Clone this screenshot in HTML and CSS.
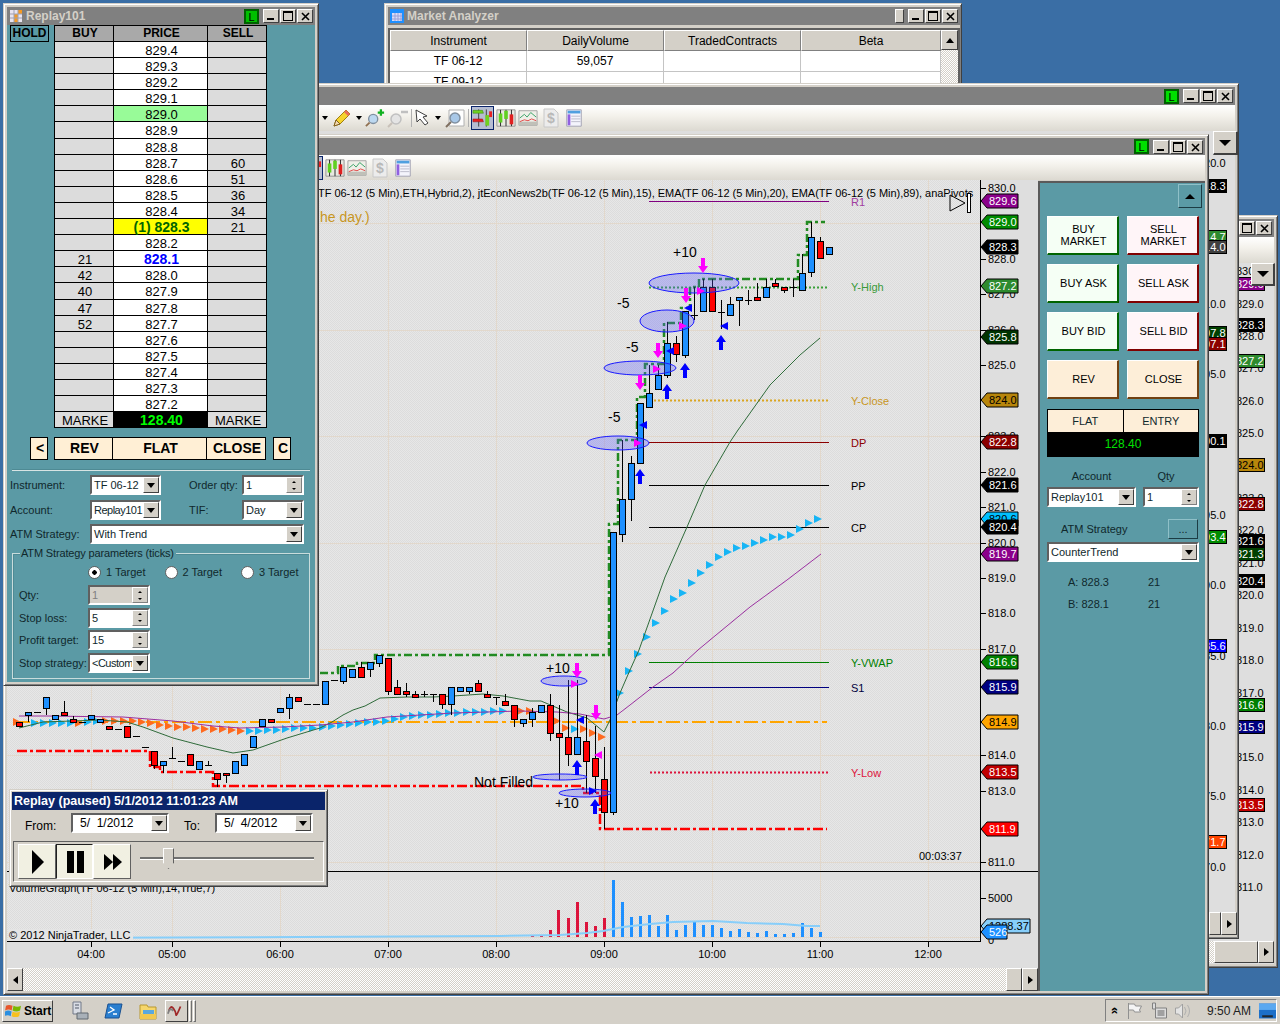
FILE: index.html
```html
<!DOCTYPE html>
<html lang="en">
<head>
    <meta charset="UTF-8">
    <title>NinjaTrader Replay</title>
    <link rel="stylesheet" href="styles.css">
</head>
<body>
<svg class="defs">
    <symbol id="i-x" viewBox="0 0 9 9"><path d="M1 1l7 7M8 1l-7 7" stroke="#000" stroke-width="1.6"/></symbol>
    <symbol id="i-grid" viewBox="0 0 14 14"><path fill="#e8e4f0" d="M1 1h12v12H1z"/><path fill="#f59a23" d="M5 5h4v4H5zM9 1h4v4H9zM5 9h4v4H5z"/><path stroke="#a0a0b0" d="M5 1v12M9 1v12M1 5h12M1 9h12"/></symbol>
    <symbol id="i-market" viewBox="0 0 14 14"><path fill="#1e90ff" d="M0 0h14v14H0z"/><path fill="#d8dcf8" d="M2 4h10v8H2z"/><path stroke="#9aa0d8" d="M5 4v8M8 4v8M11 4v8M2 7h10M2 10h10"/></symbol>
    <symbol id="i-pencil" viewBox="0 0 22 22"><path d="M3 19l2-6L15 3l4 4L9 17z" fill="#f6d32d" stroke="#a08010"/><path d="M3 19l2-6 4 4z" fill="#f3d9b0" stroke="#806020"/><path d="M15 3l4 4-2 2-4-4z" fill="#e86a5a"/></symbol>
    <symbol id="i-zoomin" viewBox="0 0 22 22"><circle cx="9" cy="12" r="5" fill="#bcd8f0" stroke="#8090a0" stroke-width="1.5"/><path d="M5 16l-4 4" stroke="#907050" stroke-width="2"/><path d="M14 5h7M17.5 1.5v7" stroke="#10b020" stroke-width="2.5"/></symbol>
    <symbol id="i-zoomout" viewBox="0 0 22 22"><circle cx="9" cy="12" r="5" fill="#e4e4e4" stroke="#c0c0c0" stroke-width="1.5"/><path d="M5 16l-4 4" stroke="#c8c0b8" stroke-width="2"/><path d="M14 5h7" stroke="#c0c0c0" stroke-width="2.5"/></symbol>
    <symbol id="i-cursor" viewBox="0 0 18 18"><path d="M2 1l1 12 3-3 5 6 3-2-5-6 4-1z" fill="#fff" stroke="#404040"/></symbol>
    <symbol id="i-zoombox" viewBox="0 0 22 22"><path d="M5 3h15v16H5z" fill="#fff" stroke="#b0b0b0"/><circle cx="11" cy="11" r="5" fill="#a8c8e8" stroke="#8090a0" stroke-width="1.5"/><path d="M7 15l-5 5" stroke="#807060" stroke-width="2"/></symbol>
    <symbol id="i-bars" viewBox="0 0 22 22"><path d="M15 2v18M7 2v18" stroke="#404040"/><path d="M1 3h10l1 3H1z" fill="#70d020" stroke="#308010" stroke-width=".5"/><path d="M1 12h10l1 3H1z" fill="#e82020" stroke="#901010" stroke-width=".5"/><path d="M14 8h4v11h-4z" fill="#70d020"/><path d="M18 4h3v6h-3z" fill="#e82020"/></symbol>
    <symbol id="i-candles" viewBox="0 0 22 22"><path d="M1 2h20v18H1z" fill="#e8e8e0" stroke="#909090"/><path d="M5 2v18M11 2v18M17 2v18" stroke="#202020"/><path d="M3 6h4v10H3z" fill="#60d020"/><path d="M9 3h4v9H9z" fill="#60d020"/><path d="M15 7h4v11h-4z" fill="#e02020"/></symbol>
    <symbol id="i-line" viewBox="0 0 22 22"><path d="M1 3h20v16H1z" fill="#efefe8" stroke="#a0a0a0"/><path d="M1 15h20v4H1z" fill="#c0c0b8"/><path d="M2 11l5-4 3 3 4-5 6 5" fill="none" stroke="#30a060"/><path d="M2 15l5-2 4 1 4-2 5 2" fill="none" stroke="#e04040"/></symbol>
    <symbol id="i-dollar" viewBox="0 0 22 22"><path d="M4 2h10l4 4v14H4z" fill="#ececec" stroke="#c8c8c8"/><text x="7" y="16" class="icon-dollar">$</text></symbol>
    <symbol id="i-table" viewBox="0 0 22 22"><path d="M3 2h16v18H3z" fill="#f4f4fc" stroke="#a0a0b0"/><path d="M4 3h14v3H4z" fill="#50a0e0"/><path d="M4 7h3v12H4z" fill="#9060e0"/><path d="M8 9h10M8 12h10M8 15h10" stroke="#b8b8c8"/></symbol>
    <symbol id="i-start" viewBox="0 0 18 16"><path d="M1 3q3-2 7 0l-1 5q-3-2-7 0z" fill="#e8562a"/><path d="M9 3q4 2 8 0l-1 5q-4 2-8 0z" fill="#7ab800"/><path d="M0 9q3-2 7 0l-1 5q-3-2-7 0z" fill="#2a8fe0"/><path d="M8 9q4 2 8 0l-1 5q-4 2-8 0z" fill="#f7c01e"/></symbol>
    <symbol id="i-server" viewBox="0 0 20 20"><path d="M3 1h8v12H3z" fill="#d8dce4" stroke="#707888"/><path d="M5 4h4M5 7h4" stroke="#505868"/><path d="M7 12h11v6H7z" fill="#a8b0b8" stroke="#606870"/></symbol>
    <symbol id="i-shell" viewBox="0 0 20 20"><path d="M4 3h14l-3 14H1z" fill="#2a7fd0" stroke="#1a5090"/><path d="M6 6l4 3-6 3M9 13h4" fill="none" stroke="#fff" stroke-width="1.3"/></symbol>
    <symbol id="i-folder" viewBox="0 0 20 20"><path d="M2 4h7l1 2h8v12H2z" fill="#f6d66a" stroke="#b89830"/><path d="M5 9h11v4H5z" fill="#58a8e0"/><path d="M2 13h16v5H2z" fill="#f0c850"/></symbol>
    <symbol id="i-ninja" viewBox="0 0 20 18"><path d="M2 9q2-7 5-3t3 7 5-9" fill="none" stroke="#a02828" stroke-width="2"/><path d="M1 12q2-8 6-3" fill="none" stroke="#808080" stroke-width="2"/></symbol>
    <symbol id="i-flag" viewBox="0 0 16 18"><path d="M2 1v16M2 2h6l1 2h6l-2 4 1 2H8L7 8H2" fill="#f4f4f4" stroke="#909090"/></symbol>
    <symbol id="i-net" viewBox="0 0 16 18"><path d="M2 1h3v6H2zM5 6h11v10H5z" fill="#dcdcdc" stroke="#808080"/><path d="M7 8h7v6H7z" fill="#a0a0a0"/></symbol>
    <symbol id="i-sound" viewBox="0 0 16 18"><path d="M1 6h3l4-4v14l-4-4H1z" fill="#e4e4e4" stroke="#a0a0a0"/><path d="M10 5q3 4 0 8M13 3q4 6 0 12" fill="none" stroke="#b0b0b0"/></symbol>
    <symbol id="i-screen" viewBox="0 0 16 14"><path d="M0 0h16v14H0z" fill="#1c6fc8"/><path d="M0 0h16v6H0z" fill="#5aa8f0"/><path d="M3 11h10v2H3z" fill="#202830"/></symbol>
</svg>

<div class="desktop">

    <!-- back window, only its right edge shows -->
    <div class="win win-far">
        <div class="titlebar">
            <span class="title-text"></span>
            <div class="ctrls"><i class="wb"><b class="g-min"></b></i><i class="wb"><b class="g-max"></b></i><i class="wb"><svg class="g-x"><use href="#i-x"/></svg></i></div>
        </div>
        <div class="toolbar"></div>
        <div class="strip-body"><svg id="strip-far" class="strip"></svg></div>
        <div class="scroll-end"><span class="dither"></span><i class="sb sb-thumb-long"></i><i class="sb"><b class="tri-r"></b></i></div>
        <i class="sb sb-drop far-drop"><b class="tri-d"></b></i>
    </div>

    <div class="win win-market">
        <div class="titlebar">
            <svg class="title-icon"><use href="#i-market"/></svg>
            <span class="title-text">Market Analyzer</span>
            <div class="ctrls"><i class="lamp lamp-off">L</i><i class="wb"><b class="g-min"></b></i><i class="wb"><b class="g-max"></b></i><i class="wb"><svg class="g-x"><use href="#i-x"/></svg></i></div>
        </div>
        <div class="market-body">
            <div class="market-grid">
                <div class="mh">Instrument</div><div class="mh">DailyVolume</div><div class="mh">TradedContracts</div><div class="mh">Beta</div>
                <div class="mc">TF 06-12</div><div class="mc">59,057</div><div class="mc"></div><div class="mc"></div>
                <div class="mc">TF 09-12</div><div class="mc"></div><div class="mc"></div><div class="mc"></div>
            </div>
            <div class="market-scroll"><i class="sb"><b class="tri-u"></b></i></div>
        </div>
    </div>

    <div class="win win-mid">
        <div class="titlebar">
            <span class="title-text">2012</span>
            <div class="ctrls"><i class="lamp">L</i><i class="wb"><b class="g-min"></b></i><i class="wb"><b class="g-max"></b></i><i class="wb"><svg class="g-x"><use href="#i-x"/></svg></i></div>
        </div>
        <div class="toolbar toolbar-mid">
            <b class="caret"></b>
            <svg class="tb"><use href="#i-pencil"/></svg><b class="caret"></b>
            <svg class="tb tb-n"><use href="#i-zoomin"/></svg>
            <svg class="tb"><use href="#i-zoomout"/></svg>
            <i class="tb-sep"></i>
            <svg class="tb tb-c"><use href="#i-cursor"/></svg><b class="caret"></b>
            <svg class="tb"><use href="#i-zoombox"/></svg>
            <i class="tb-sep"></i>
            <svg class="tb tb-on"><use href="#i-bars"/></svg>
            <svg class="tb tb-n"><use href="#i-candles"/></svg>
            <svg class="tb tb-n"><use href="#i-line"/></svg>
            <svg class="tb"><use href="#i-dollar"/></svg>
            <svg class="tb tb-n"><use href="#i-table"/></svg>
        </div>
        <div class="strip-body"><svg id="strip-mid" class="strip"></svg></div>
        <div class="scroll-end mid-scroll"><i class="sb sb-thumb"></i><i class="sb"><b class="tri-r"></b></i></div>
        <i class="sb sb-drop mid-drop"><b class="tri-d"></b></i>
    </div>

    <!-- main chart window -->
    <div class="win win-front">
        <div class="titlebar">
            <span class="title-text"></span>
            <div class="ctrls"><i class="lamp">L</i><i class="wb"><b class="g-min"></b></i><i class="wb"><b class="g-max"></b></i><i class="wb"><svg class="g-x"><use href="#i-x"/></svg></i></div>
        </div>
        <div class="toolbar toolbar-front">
            <svg class="tb tb-on"><use href="#i-bars"/></svg>
            <svg class="tb tb-n"><use href="#i-candles"/></svg>
            <svg class="tb tb-n"><use href="#i-line"/></svg>
            <svg class="tb"><use href="#i-dollar"/></svg>
            <svg class="tb tb-n"><use href="#i-table"/></svg>
        </div>
        <div class="front-main">
            <div class="chart-col">
                <svg id="chart" class="chart" width="1031" height="788" viewBox="7 180 1031 788"></svg>
                <div class="hscroll">
                    <i class="sb"><b class="tri-l"></b></i>
                    <span class="dither"></span>
                    <i class="sb"></i>
                    <i class="sb"><b class="tri-r"></b></i>
                </div>
            </div>
            <div class="side-panel">
                <div class="panel-top"><i class="panel-up"><b class="tri-u"></b></i></div>
                <div class="order-btns">
                    <div class="obtn obtn-buy">BUY<br>MARKET</div><div class="obtn obtn-sell">SELL<br>MARKET</div>
                    <div class="obtn obtn-buy">BUY ASK</div><div class="obtn obtn-sell">SELL ASK</div>
                    <div class="obtn obtn-buy">BUY BID</div><div class="obtn obtn-sell">SELL BID</div>
                    <div class="obtn obtn-rev">REV</div><div class="obtn obtn-rev">CLOSE</div>
                </div>
                <div class="pos-box">
                    <div class="pos-head"><span>FLAT</span><span>ENTRY</span></div>
                    <div class="pos-val">128.40</div>
                </div>
                <div class="panel-form">
                    <span class="pf-label">Account</span><span class="pf-label pf-qty">Qty</span>
                    <div class="combo"><span>Replay101</span><i class="drop"></i></div>
                    <div class="spin"><span>1</span><i class="arrows"><b class="tri-u"></b><b class="tri-d"></b></i></div>
                </div>
                <div class="atm-row"><span>ATM Strategy</span><i class="more-btn">...</i></div>
                <div class="combo atm-combo"><span>CounterTrend</span><i class="drop"></i></div>
                <div class="quote-row"><span>A: 828.3</span><span>21</span></div>
                <div class="quote-row"><span>B: 828.1</span><span>21</span></div>
            </div>
        </div>
    </div>

    <!-- SuperDOM -->
    <div class="win win-dom">
        <div class="titlebar">
            <svg class="title-icon"><use href="#i-grid"/></svg>
            <span class="title-text">Replay101</span>
            <div class="ctrls"><i class="lamp lamp-dark">L</i><i class="wb"><b class="g-min"></b></i><i class="wb"><b class="g-max"></b></i><i class="wb"><svg class="g-x"><use href="#i-x"/></svg></i></div>
        </div>
        <div class="dom-body">
            <div class="dom-top">
                <div class="hold">HOLD</div>
                <div class="ladder">
                    <div class="lh">BUY</div><div class="lh">PRICE</div><div class="lh">SELL</div>
                    <div class="ls"></div><div class="lp">829.4</div><div class="ls"></div>
                    <div class="ls"></div><div class="lp">829.3</div><div class="ls"></div>
                    <div class="ls"></div><div class="lp">829.2</div><div class="ls"></div>
                    <div class="ls"></div><div class="lp">829.1</div><div class="ls"></div>
                    <div class="ls"></div><div class="lp lp-high">829.0</div><div class="ls"></div>
                    <div class="ls"></div><div class="lp">828.9</div><div class="ls"></div>
                    <div class="ls"></div><div class="lp">828.8</div><div class="ls"></div>
                    <div class="ls"></div><div class="lp">828.7</div><div class="ls">60</div>
                    <div class="ls"></div><div class="lp">828.6</div><div class="ls">51</div>
                    <div class="ls"></div><div class="lp">828.5</div><div class="ls">36</div>
                    <div class="ls"></div><div class="lp">828.4</div><div class="ls">34</div>
                    <div class="ls"></div><div class="lp lp-pos">(1) 828.3</div><div class="ls">21</div>
                    <div class="ls"></div><div class="lp">828.2</div><div class="ls"></div>
                    <div class="ls">21</div><div class="lp lp-last">828.1</div><div class="ls"></div>
                    <div class="ls">42</div><div class="lp">828.0</div><div class="ls"></div>
                    <div class="ls">40</div><div class="lp">827.9</div><div class="ls"></div>
                    <div class="ls">47</div><div class="lp">827.8</div><div class="ls"></div>
                    <div class="ls">52</div><div class="lp">827.7</div><div class="ls"></div>
                    <div class="ls"></div><div class="lp">827.6</div><div class="ls"></div>
                    <div class="ls"></div><div class="lp">827.5</div><div class="ls"></div>
                    <div class="ls"></div><div class="lp">827.4</div><div class="ls"></div>
                    <div class="ls"></div><div class="lp">827.3</div><div class="ls"></div>
                    <div class="ls"></div><div class="lp">827.2</div><div class="ls"></div>
                    <div class="ls">MARKE</div><div class="lp lp-pnl">128.40</div><div class="ls">MARKE</div>
                </div>
            </div>
            <div class="dom-actions">
                <div class="da da-small">&lt;</div>
                <div class="da-group">
                    <div class="da da-a">REV</div><div class="da da-b">FLAT</div><div class="da da-a">CLOSE</div>
                </div>
                <div class="da da-small">C</div>
            </div>
            <div class="dom-sep"></div>
            <div class="dom-form">
                <label>Instrument:</label>
                <div class="combo"><span>TF 06-12</span><i class="drop"></i></div>
                <i></i>
                <label>Order qty:</label>
                <div class="spin"><span>1</span><i class="arrows"><b class="tri-u"></b><b class="tri-d"></b></i></div>

                <label>Account:</label>
                <div class="combo"><span class="tight">Replay101</span><i class="drop"></i></div>
                <i></i>
                <label>TIF:</label>
                <div class="combo"><span>Day</span><i class="drop"></i></div>

                <label>ATM Strategy:</label>
                <div class="combo form-wide"><span>With Trend</span><i class="drop"></i></div>
            </div>
            <div class="group">
                <span class="group-title">ATM Strategy parameters (ticks)</span>
                <div class="radios">
                    <span class="radio radio-on">1 Target</span>
                    <span class="radio">2 Target</span>
                    <span class="radio">3 Target</span>
                </div>
                <div class="params">
                    <label>Qty:</label>
                    <div class="spin spin-off"><span>1</span><i class="arrows"><b class="tri-u"></b><b class="tri-d"></b></i></div>
                    <label>Stop loss:</label>
                    <div class="spin"><span>5</span><i class="arrows"><b class="tri-u"></b><b class="tri-d"></b></i></div>
                    <label>Profit target:</label>
                    <div class="spin"><span>15</span><i class="arrows"><b class="tri-u"></b><b class="tri-d"></b></i></div>
                    <label>Stop strategy:</label>
                    <div class="combo"><span class="tight">&lt;Custom</span><i class="drop"></i></div>
                </div>
            </div>
        </div>
    </div>

    <!-- replay control -->
    <div class="win-replay">
        <div class="replay-title">Replay (paused) 5/1/2012 11:01:23 AM</div>
        <div class="replay-dates">
            <label>From:</label>
            <div class="combo"><span>5/ &nbsp;1/2012</span><i class="drop"></i></div>
            <label class="to-label">To:</label>
            <div class="combo"><span>5/ &nbsp;4/2012</span><i class="drop"></i></div>
        </div>
        <div class="player">
            <div class="pbtn"><b class="play"></b></div>
            <div class="pbtn pbtn-down"><b class="pause"></b></div>
            <div class="pbtn"><b class="play play-s"></b><b class="play play-s"></b></div>
            <div class="slider"><i class="thumb"></i></div>
        </div>
    </div>
</div>

<div class="taskbar">
    <div class="start"><svg class="start-flag"><use href="#i-start"/></svg>Start</div>
    <div class="quick">
        <svg class="qi"><use href="#i-server"/></svg>
        <svg class="qi"><use href="#i-shell"/></svg>
        <svg class="qi"><use href="#i-folder"/></svg>
    </div>
    <div class="task-btn"><svg class="qi"><use href="#i-ninja"/></svg></div>
    <i class="grip"></i><i class="grip"></i>
    <div class="tray">
        <span class="chev">&#187;</span>
        <svg class="ti"><use href="#i-flag"/></svg>
        <svg class="ti"><use href="#i-net"/></svg>
        <svg class="ti"><use href="#i-sound"/></svg>
        <span class="clock">9:50 AM</span>
        <svg class="ti"><use href="#i-screen"/></svg>
    </div>
</div>

<script src="chart.js"></script>
</body>
</html>
```

FILE: styles.css
```css
* {
    box-sizing: border-box;
}
html, body {
    margin: 0;
    height: 100%;
    overflow: hidden;
}
body {
    font-family: "Liberation Sans", Arial, sans-serif;
    font-size: 11px;
    color: #000;
    background-color: #3a6ea5;
    display: flex;
    flex-direction: column;
    height: 1024px;
}
i, b {
    display: block;
    font-style: normal;
}
.defs {
    display: none;
}
.icon-dollar {
    font: bold 14px "Liberation Sans", sans-serif;
    fill: #b8b8b8;
}
.desktop {
    position: relative;
    flex: 1;
}

/* window chrome */
.win {
    position: absolute;
    display: flex;
    flex-direction: column;
    background-color: #d4d0c8;
    border: 1px solid;
    border-color: #d4d0c8 #404040 #404040 #d4d0c8;
    box-shadow: inset 1px 1px 0 #fff, inset -1px -1px 0 #808080;
    padding: 3px;
}
.titlebar {
    display: flex;
    align-items: center;
    flex: 0 0 18px;
    background-color: #808080;
    padding: 0 2px 0 2px;
}
.title-icon {
    width: 14px;
    height: 14px;
    margin-right: 3px;
}
.title-text {
    font-weight: bold;
    font-size: 12px;
    color: #d4d0c8;
}
.ctrls {
    margin-left: auto;
    display: flex;
    align-items: center;
    gap: 1px;
}
.lamp {
    width: 15px;
    height: 15px;
    margin-right: 3px;
    background-color: #00e000;
    border: 2px solid #006000;
    font-size: 11px;
    line-height: 12px;
    text-align: center;
}
.lamp-dark {
    background-color: #00c000;
}
.lamp-off {
    width: 9px;
    height: 14px;
    background-color: #d4d0c8;
    border: 1px solid;
    border-color: #fff #404040 #404040 #fff;
    color: transparent;
}
.wb {
    position: relative;
    width: 16px;
    height: 14px;
    background-color: #d4d0c8;
    border: 1px solid;
    border-color: #fff #404040 #404040 #fff;
}
.g-min {
    position: absolute;
    left: 3px;
    bottom: 2px;
    width: 7px;
    height: 2px;
    background-color: #000;
}
.g-max {
    position: absolute;
    left: 2px;
    top: 1px;
    width: 10px;
    height: 10px;
    border: 1px solid #000;
    border-top-width: 2px;
}
.g-x {
    position: absolute;
    left: 3px;
    top: 2px;
    width: 9px;
    height: 9px;
}
.toolbar {
    display: flex;
    align-items: center;
    flex: 0 0 26px;
    gap: 2px;
    background: linear-gradient(#fff, #f4f2ec 40%, #dcd9d1);
}
.toolbar-mid {
    padding-left: 77px;
}
.toolbar-front {
    padding-left: 293px;
}
.tb {
    width: 22px;
    height: 22px;
}
.tb-n {
    width: 20px;
}
.tb-c {
    width: 18px;
    height: 18px;
}
.tb-on {
    width: 23px;
    height: 24px;
    background-color: #b6bdd2;
    border: 1px solid #0a246a;
}
.tb-sep {
    width: 1px;
    height: 18px;
    background-color: #b0b0b0;
}
.caret {
    width: 0;
    height: 0;
    margin: 0 1px;
    border: 3px solid transparent;
    border-top: 4px solid #000;
    border-bottom: 0;
}

/* scroll bar parts and small arrows */
.sb {
    display: flex;
    align-items: center;
    justify-content: center;
    flex: 0 0 16px;
    height: 100%;
    background-color: #d4d0c8;
    border: 1px solid;
    border-color: #fff #404040 #404040 #fff;
}
.tri-r, .tri-l, .tri-u, .tri-d {
    width: 0;
    height: 0;
    border: 4px solid transparent;
}
.tri-r {
    border-left: 5px solid #000;
    border-right: 0;
}
.tri-l {
    border-right: 5px solid #000;
    border-left: 0;
}
.tri-u {
    border-bottom: 5px solid #000;
    border-top: 0;
}
.tri-d {
    border-top: 5px solid #000;
    border-bottom: 0;
}
.dither {
    flex: 1;
    height: 100%;
    background: repeating-conic-gradient(#fff 0 25%, #d4d0c8 0 50%) 0 0 / 2px 2px;
}

/* far window */
.win-far {
    left: 1100px;
    top: 215px;
    width: 178px;
    height: 753px;
}
.strip-body {
    position: relative;
    flex: 1;
    background-color: #dedede;
    min-height: 0;
}
.strip {
    position: absolute;
    left: 0;
    top: 0;
    width: 100%;
    height: 100%;
}
.scroll-end {
    display: flex;
    flex: 0 0 24px;
    background-color: #dedede;
}
.sb-thumb-long {
    flex-basis: 44px;
}
.win-far .scroll-end {
    padding: 1px 0;
}
.far-drop {
    position: absolute;
    left: 150px;
    top: 47px;
    width: 24px;
    height: 23px;
}
.sb-drop {
    flex: none;
    border-width: 1px 2px 2px 1px;
}
.sb-drop .tri-d {
    border-width: 6px 6px 0;
}

/* market analyzer */
.win-market {
    left: 384px;
    top: 3px;
    width: 578px;
    height: 90px;
    padding-right: 1px;
}
.market-body {
    display: flex;
    flex: 1;
    background-color: #fff;
    border: 2px solid #606060;
    margin-top: 3px;
    overflow: hidden;
}
.market-grid {
    flex: 1;
    display: grid;
    grid-template-columns: 137px 137px 137px 1fr;
    grid-auto-rows: 21px;
    align-content: start;
    font-size: 12px;
    text-align: center;
}
.mh {
    line-height: 21px;
    background-color: #d4d0c8;
    border: 1px solid;
    border-color: #fff #808080 #808080 #fff;
}
.mc {
    line-height: 21px;
    border-right: 1px solid #c4c4c4;
    border-bottom: 1px solid #c4c4c4;
}
.market-scroll {
    flex: 0 0 17px;
    background: repeating-conic-gradient(#fff 0 25%, #d4d0c8 0 50%) 0 0 / 2px 2px;
}
.market-scroll .sb {
    height: 20px;
}

/* mid window */
.win-mid {
    left: 240px;
    top: 83px;
    width: 999px;
    height: 856px;
}
.mid-scroll {
    position: absolute;
    left: 968px;
    top: 828px;
    height: 23px;
    flex: none;
    background: none;
}
.sb-thumb {
    flex-basis: 12px;
}
.mid-drop {
    position: absolute;
    left: 972px;
    top: 47px;
    width: 25px;
    height: 24px;
}

/* main chart window */
.win-front {
    left: 3px;
    top: 134px;
    width: 1206px;
    height: 861px;
}
.win-front .titlebar {
    flex-basis: 17px;
}
.win-front .toolbar {
    flex-basis: 25px;
}
.front-main {
    display: flex;
    flex: 1;
    min-height: 0;
}
.chart-col {
    flex: 0 0 1031px;
    background-color: #dedede;
    display: flex;
    flex-direction: column;
}
.chart {
    display: block;
    flex: none;
}
.ax {
    font: 11px "Liberation Sans", Arial, sans-serif;
}
.hdr {
    font: 11px "Liberation Sans", Arial, sans-serif;
    letter-spacing: -.03px;
}
.note {
    font: 14px "Liberation Sans", Arial, sans-serif;
}
.hscroll {
    display: flex;
    height: 24px;
}
.side-panel {
    flex: 1;
    display: flex;
    flex-direction: column;
    background-color: #5b9aa5;
    border-left: 2px solid #5a5a5a;
    border-top: 2px solid #5a5a5a;
    margin-top: 1px;
    padding: 1px 6px 0 7px;
    color: #10282c;
}
.panel-top {
    display: flex;
    justify-content: flex-end;
    margin-right: -3px;
}
.panel-up {
    display: flex;
    align-items: center;
    justify-content: center;
    width: 24px;
    height: 24px;
    background-color: #5b9aa5;
    border: 1px solid;
    border-color: #8fc0c8 #1c3c44 #1c3c44 #8fc0c8;
}
.panel-up .tri-u {
    border-width: 0 5px 5px;
}
.order-btns {
    display: grid;
    grid-template-columns: 72px 72px;
    grid-auto-rows: 39px;
    gap: 9px 8px;
    margin-top: 8px;
}
.obtn {
    display: flex;
    align-items: center;
    justify-content: center;
    text-align: center;
    line-height: 12px;
    color: #000;
    border-style: solid;
    border-width: 1px 2px 2px 1px;
    padding-left: 2px;
}
.obtn-buy {
    background-color: #f5fff5;
    border-color: #fff #006400 #006400 #fff;
}
.obtn-sell {
    background-color: #fff5f8;
    border-color: #fff #800000 #800000 #fff;
}
.obtn-rev {
    background-color: #fdeed8;
    border-color: #fff #704010 #704010 #fff;
}
.pos-box {
    margin-top: 10px;
    width: 152px;
    background-color: #000;
    border: 1px solid #000;
}
.pos-head {
    display: grid;
    grid-template-columns: 1fr 1fr;
    gap: 1px;
    height: 22px;
    line-height: 22px;
    text-align: center;
}
.pos-head span {
    background-color: #fdeed8;
}
.pos-val {
    height: 24px;
    line-height: 24px;
    text-align: center;
    font-size: 12px;
    color: #00e000;
}
.panel-form {
    display: grid;
    grid-template-columns: 89px 56px;
    grid-template-rows: 14px 20px;
    gap: 4px 7px;
    margin-top: 12px;
}
.pf-label {
    text-align: center;
    line-height: 14px;
}
.pf-qty {
    padding-right: 10px;
}
.atm-row {
    display: flex;
    align-items: center;
    justify-content: space-between;
    height: 20px;
    margin-top: 12px;
    padding-left: 14px;
}
.more-btn {
    width: 30px;
    height: 20px;
    margin-right: 1px;
    background-color: #5b9aa5;
    border: 1px solid;
    border-color: #8fc0c8 #1c3c44 #1c3c44 #8fc0c8;
    text-align: center;
    line-height: 18px;
}
.atm-combo {
    width: 152px;
    height: 20px;
    margin-top: 3px;
}
.quote-row {
    display: grid;
    grid-template-columns: 80px 20px;
    padding-left: 21px;
    margin-top: 13px;
    height: 9px;
    line-height: 9px;
}
.atm-combo + .quote-row {
    margin-top: 16px;
}

/* form controls */
.combo, .spin {
    display: flex;
    align-items: center;
    min-width: 0;
    height: 20px;
    background-color: #fff;
    border: 2px solid;
    border-color: #606060 #fff #fff #606060;
    padding-left: 2px;
    white-space: nowrap;
    overflow: hidden;
}
.combo span, .spin span {
    flex: 1;
    min-width: 0;
}
.tight {
    letter-spacing: -.5px;
}
.drop {
    position: relative;
    flex: 0 0 16px;
    height: 16px;
    background-color: #d4d0c8;
    border: 1px solid;
    border-color: #fff #404040 #404040 #fff;
}
.drop::after {
    content: "";
    position: absolute;
    left: 3px;
    top: 5px;
    border: 4px solid transparent;
    border-top: 5px solid #000;
    border-bottom: 0;
}
.arrows {
    flex: 0 0 16px;
    height: 16px;
    background-color: #d4d0c8;
    display: flex;
    flex-direction: column;
    align-items: center;
    justify-content: space-around;
    border: 1px solid;
    border-color: #fff #808080 #808080 #fff;
}
.arrows .tri-u, .arrows .tri-d {
    border-width: 2px;
    border-bottom-width: 0;
}
.arrows .tri-u {
    border-width: 0 2px 2px;
}
.spin-off {
    background-color: #d4d0c8;
    color: #808080;
}

/* SuperDOM window */
.win-dom {
    left: 3px;
    top: 3px;
    width: 316px;
    height: 683px;
}
.dom-body {
    flex: 1;
    background-color: #5b9aa5;
    color: #10282c;
}
.dom-top {
    display: flex;
    gap: 5px;
    padding-left: 3px;
}
.hold {
    flex: 0 0 39px;
    height: 17px;
    border: 1px solid #000;
    text-align: center;
    font: bold 12px/15px "Liberation Sans", sans-serif;
    color: #000;
}
.ladder {
    display: grid;
    grid-template-columns: 58px 93px 58px;
    grid-template-rows: 15px;
    grid-auto-rows: 15.1px;
    gap: 1px;
    padding: 1px;
    background-color: #000;
    font-size: 13px;
    line-height: 15px;
    text-align: center;
    color: #000;
}
.lh {
    background-color: #a9a9a9;
    font-size: 12px;
    font-weight: bold;
    padding-left: 2px;
}
.ls {
    background-color: #dcdcdc;
    padding: 1px 0 0 2px;
}
.lp {
    background-color: #fff;
    padding: 1px 0 0 2px;
}
.lp-high {
    background-color: #98fb98;
}
.lp-pos {
    background-color: #ff0;
    color: #006400;
    font-weight: bold;
    font-size: 14px;
}
.lp-last {
    color: #0000ff;
    font-weight: bold;
    font-size: 14px;
}
.lp-pnl {
    background-color: #000;
    color: #00ff00;
    font-weight: bold;
    font-size: 14px;
}
.dom-actions {
    display: flex;
    gap: 6px;
    margin: 9px 0 0 23px;
    color: #000;
}
.da {
    height: 23px;
    padding-left: 2px;
    background-color: #ffefd5;
    border: 1px solid #000;
    font: bold 14px/21px "Liberation Sans", sans-serif;
    text-align: center;
}
.da-small {
    flex: 0 0 18px;
}
.da-group {
    display: grid;
    grid-template-columns: 59px 94px 59px;
    margin-right: 1px;
}
.da-a + .da, .da-b + .da {
    border-left: 0;
}
.dom-sep {
    height: 2px;
    margin: 9px 5px 0;
    background-color: #d8e4e4;
    border-top: 1px solid #4e8a94;
}
.dom-form {
    display: grid;
    grid-template-columns: 80px 71px 28px 53px 62px;
    grid-auto-rows: 20px;
    row-gap: 4.5px;
    align-items: center;
    padding-left: 3px;
    margin-top: 4px;
}
.form-wide {
    grid-column: 2 / 6;
}
.group {
    position: relative;
    height: 126px;
    margin: 9px 5px 0;
    border: 1px solid #c8dcdc;
    box-shadow: inset 1px 1px 0 #4e8a94;
    padding: 11px 6px 0;
}
.group-title {
    position: absolute;
    left: 7px;
    top: -7px;
    padding: 0 2px 0 1px;
    background-color: #5b9aa5;
    letter-spacing: -.15px;
}
.radios {
    display: grid;
    grid-template-columns: 76.5px 76.5px 76.5px;
    margin-left: 69px;
    height: 14px;
}
.radio {
    display: flex;
    align-items: center;
    gap: 5px;
}
.radio::before {
    content: "";
    flex: 0 0 11px;
    height: 11px;
    border-radius: 50%;
    background-color: #fff;
    border: 1px solid #606060;
}
.radio-on::before {
    background: radial-gradient(#000 0 2px, #fff 2.5px);
}
.params {
    display: grid;
    grid-template-columns: 69px 62px;
    grid-auto-rows: 20px;
    row-gap: 2.5px;
    align-items: center;
    margin-top: 6px;
}
.params label {
    white-space: nowrap;
}

/* replay control */
.win-replay {
    position: absolute;
    left: 9px;
    top: 789px;
    width: 319px;
    height: 98px;
    background-color: #d4d0c8;
    border: 1px solid;
    border-color: #d4d0c8 #404040 #404040 #d4d0c8;
    box-shadow: inset 1px 1px 0 #fff, inset -1px -1px 0 #808080;
    padding: 2px;
}
.replay-title {
    height: 18px;
    padding-left: 2px;
    background-color: #0a246a;
    color: #fff;
    font: bold 12.5px/18px "Liberation Sans", sans-serif;
}
.replay-dates {
    display: grid;
    grid-template-columns: 46px 98px 15px 31px 98px;
    align-items: center;
    margin-top: 3px;
    padding-left: 13px;
}
.replay-dates label {
    font-size: 12px;
    padding-top: 6px;
}
.replay-dates label.to-label {
    grid-column: 4;
}
.replay-dates .combo span {
    padding-left: 5px;
    font-size: 12px;
}
.player {
    display: flex;
    height: 41px;
    margin: 8px 1px 0;
    padding: 2px 3px 2px 4px;
    border: 1px solid;
    border-color: #606060 #fff #fff #606060;
}
.pbtn {
    display: flex;
    align-items: center;
    justify-content: center;
    flex: 0 0 38px;
    padding-left: 2px;
    background-color: #f1f0e2;
    border: 1px solid;
    border-color: #fff #606060 #606060 #fff;
}
.pbtn-down {
    flex-basis: 37px;
    border-color: #202020 #fff #fff #202020;
}
.play {
    border: 12px solid transparent;
    border-left: 12px solid #000;
    border-right: 0;
}
.play-s {
    border-width: 8px 0 8px 9px;
}
.pause {
    width: 17px;
    height: 22px;
    border-left: 7px solid #000;
    border-right: 7px solid #000;
}
.slider {
    position: relative;
    flex: 1;
    height: 3px;
    margin: 13px 6px 0 9px;
    background-color: #707070;
    border-bottom: 1px solid #fff;
}
.thumb {
    position: absolute;
    left: 23px;
    top: -9px;
    width: 11px;
    height: 21px;
    background-color: #d4d0c8;
    border: 1px solid #606060;
    border-top-color: #fff;
    border-left-color: #fff;
    clip-path: polygon(0 0, 100% 0, 100% 70%, 50% 100%, 0 70%);
}

/* taskbar */
.taskbar {
    display: flex;
    align-items: center;
    flex: 0 0 28px;
    background-color: #d4d0c8;
    border-top: 1px solid #fff;
    padding: 0 3px 0 2px;
}
.start {
    display: flex;
    align-items: center;
    gap: 2px;
    width: 51px;
    height: 22px;
    padding-left: 2px;
    background-color: #d4d0c8;
    border: 1px solid;
    border-color: #fff #404040 #404040 #fff;
    font: bold 12px "Liberation Sans", sans-serif;
}
.start-flag {
    width: 17px;
    height: 15px;
}
.quick {
    display: flex;
    gap: 14px;
    margin-left: 17px;
}
.qi {
    width: 20px;
    height: 20px;
}
.task-btn {
    width: 23px;
    height: 22px;
    margin-left: 7px;
    padding: 1px;
    border: 1px solid;
    border-color: #fff #404040 #404040 #fff;
}
.task-btn .qi {
    width: 18px;
    height: 18px;
}
.grip {
    width: 3px;
    height: 22px;
    margin-left: 1px;
    border: 1px solid;
    border-color: #fff #707070 #707070 #fff;
}
.tray {
    display: flex;
    align-items: center;
    gap: 7px;
    margin-left: auto;
    width: 172px;
    height: 23px;
    padding-left: 3px;
    border: 1px solid;
    border-color: #808080 #fff #fff #808080;
}
.chev {
    font: bold 13px "Liberation Sans", sans-serif;
    transform: rotate(-90deg);
    width: 12px;
    text-align: center;
}
.ti {
    flex: none;
    width: 17px;
    height: 18px;
}
.clock {
    margin-left: 9px;
    margin-right: 1px;
    font-size: 12px;
    color: #202020;
    white-space: nowrap;
}
```

FILE: chart.js
```js
const NS = 'http://www.w3.org/2000/svg';

function add(svg, tag, attrs, txt) {
    const el = document.createElementNS(NS, tag);
    for (const k in attrs) el.setAttribute(k, attrs[k]);
    if (txt !== undefined) el.textContent = txt;
    svg.appendChild(el);
    return el;
}

function line(svg, x1, y1, x2, y2, color, w, dash) {
    const attrs = { x1, y1, x2, y2, stroke: color, 'stroke-width': w || 1 };
    if (dash) attrs['stroke-dasharray'] = dash;
    return add(svg, 'line', attrs);
}

function path(svg, pts, color, w, dash) {
    const attrs = { points: pts.map(p => p.join(',')).join(' '), fill: 'none', stroke: color, 'stroke-width': w || 1 };
    if (dash) attrs['stroke-dasharray'] = dash;
    return add(svg, 'polyline', attrs);
}

function label(svg, x, y, s, fill, cls) {
    return add(svg, 'text', { x, y, fill: fill || '#000', class: cls || 'ax' }, s);
}

const priceY = p => 188 + (830 - p) * 35.45;

// [x, bodyTop, bodyBottom, wickTop, wickBottom, kind]  b = blue, r = red, d = doji
const candles = [
    [19,722,726,722,726,'r'],[28,712,715,712,722,'b'],[37,712,712,712,712,'d'],[46,697,708,697,715,'b'],
    [55,715,719,715,719,'b'],[64,712,715,701,715,'r'],[73,719,722,716,722,'r'],[82,722,722,722,722,'d'],
    [91,715,719,715,719,'b'],[100,719,722,719,722,'b'],[109,726,729,726,729,'r'],[118,729,729,729,729,'d'],
    [127,726,737,726,737,'r'],[136,736,736,736,736,'d'],[145,747,747,747,747,'d'],[154,751,765,751,769,'r'],
    [163,761,765,761,773,'b'],[172,758,758,747,758,'d'],[181,761,761,761,761,'d'],[190,754,765,754,765,'r'],
    [199,761,769,761,769,'b'],[208,765,765,761,765,'d'],[217,773,779,773,787,'r'],[226,773,775,773,783,'r'],
    [235,761,773,761,773,'b'],[244,754,765,754,765,'b'],[253,736,747,736,747,'b'],[262,719,726,719,726,'b'],
    [271,719,722,719,722,'r'],[280,708,712,708,712,'b'],[289,697,708,694,719,'b'],[298,697,701,697,701,'r'],
    [307,704,704,704,704,'d'],[316,704,704,704,704,'d'],[325,681,704,681,704,'b'],[334,680,680,680,680,'d'],
    [343,667,681,667,684,'b'],[352,669,677,669,677,'b'],[361,667,677,662,677,'r'],[370,662,669,662,677,'b'],
    [379,655,663,655,667,'b'],[388,658,691,658,695,'r'],[397,687,694,680,694,'r'],[406,691,694,683,697,'r'],
    [415,694,697,691,697,'r'],[424,694,694,691,697,'d'],[433,694,694,694,702,'d'],[442,694,704,694,709,'r'],
    [451,687,704,687,715,'b'],[460,687,691,687,691,'b'],[469,687,691,687,694,'b'],[478,683,691,680,691,'r'],
    [487,694,697,691,697,'r'],[496,697,697,697,705,'d'],[505,701,705,694,705,'r'],[514,705,719,705,727,'r'],
    [523,719,723,719,727,'b'],[532,712,719,708,727,'b'],[541,705,712,705,712,'b'],[550,705,733,694,741,'r'],
    [559,733,737,705,780,'r'],[568,737,754,680,766,'r'],[577,737,754,680,754,'b'],[586,741,761,715,793,'r'],
    [595,758,776,726,793,'r'],[604,779,812,747,829,'r'],[613,532,812,532,815,'b'],[622,499,534,440,542,'b'],
    [631,463,499,456,521,'b'],[640,403,463,403,463,'b'],[649,393,407,365,407,'b'],[658,375,389,365,389,'b'],
    [667,343,375,322,378,'b'],[676,343,354,336,362,'r'],[685,311,355,311,358,'b'],[694,315,315,287,320,'d'],
    [703,287,311,279,311,'b'],[712,287,311,279,311,'r'],[721,312,312,300,329,'d'],[730,304,315,297,315,'b'],
    [739,297,300,297,326,'b'],[748,300,300,290,305,'d'],[757,297,300,283,300,'r'],[766,287,297,279,297,'b'],
    [775,283,286,279,286,'r'],[784,287,290,287,293,'r'],[793,287,287,279,297,'d'],[802,273,290,254,290,'b'],
    [811,237,272,222,277,'b'],[820,241,258,237,258,'r'],[829,247,254,247,254,'b']
];

const volumes = [
    [550,930,'r'],[558,910,'r'],[568,918,'r'],[577,902,'r'],[586,922,'r'],[595,926,'r'],[604,918,'r'],
    [613,880,'b'],[622,902,'b'],[631,917,'b'],[640,916,'b'],[649,915,'b'],[658,926,'b'],[667,915,'b'],
    [676,930,'b'],[685,925,'b'],[694,922,'b'],[703,925,'b'],[712,925,'b'],[721,928,'b'],[730,931,'b'],
    [739,929,'b'],[748,932,'b'],[757,933,'b'],[766,931,'b'],[775,934,'b'],[784,934,'b'],[793,933,'b'],
    [802,923,'b'],[811,928,'b'],[820,932,'b'],[532,935,'r'],[541,935,'r']
];

const emaGreen = [[19,728],[43,722],[100,720],[127,722],[143,727],[173,738],[207,747],[233,753],[253,750],[287,738],[320,728],[332,722],[343,715],[353,710],[365,706],[380,698],[407,697],[433,697],[453,696],[483,694],[503,696],[530,701],[541,701],[567,712],[587,718],[604,732],[610,720],[620,693],[630,670],[639,650],[665,577],[687,527],[705,485],[730,442],[738,430],[770,385],[800,355],[820,338]];
const emaPurple = [[19,716],[47,716],[123,717],[173,721],[213,726],[240,728],[283,727],[320,725],[353,722],[387,717],[420,715],[453,713],[487,712],[520,711],[557,712],[580,714],[604,719],[617,715],[630,705],[653,687],[673,673],[698,650],[710,640],[750,607],[787,580],[821,554]];
const volLine = [[9,938],[300,937],[500,936],[560,935],[587,933],[603,931],[623,927],[650,924],[673,922],[713,921],[747,923],[783,924],[807,926],[820,926]];

const stepGreen = [[320,673],[338,673],[338,666],[357,666],[357,663],[375,663],[375,655],[609,655],[609,524],[618,524],[618,440],[637,440],[637,397],[645,397],[645,364],[664,364],[664,323],[681,323],[681,308],[690,308],[690,287],[699,287],[699,279],[798,279],[798,255],[807,255],[807,222],[825,222]];
const stepRed = [[17,751],[150,751],[150,767],[160,767],[160,772],[213,772],[213,786],[583,786],[583,793],[600,793],[600,829],[827,829]];

const cyanMarks = [[35,723],[44,723],[53,723],[62,723],[71,723],[88,722],[97,721],[250,731],[259,731],[268,730],[277,730],[286,729],[295,728],[304,728],[313,728],[323,727],[332,726],[341,725],[350,724],[359,723],[368,722],[377,722],[386,721],[395,719],[404,717],[413,716],[422,715],[431,715],[440,714],[449,713],[458,713],[467,712],[476,712],[485,712],[494,711],[503,711],[575,729],[620,693],[629,671],[638,654],[647,637],[656,623],[665,611],[674,599],[683,593],[692,583],[701,573],[710,565],[719,557],[728,552],[737,548],[746,546],[755,543],[764,540],[773,537],[782,537],[791,535],[800,529],[809,523],[818,519]];
const orangeMarks = [[17,722],[79,723],[106,721],[115,721],[124,721],[133,721],[142,722],[151,723],[160,725],[169,726],[178,727],[187,727],[196,728],[205,729],[214,729],[223,729],[232,730],[241,731],[521,711],[530,711],[557,721],[566,728],[584,729],[593,733],[602,737]];

const ellipses = [[694,283,45,10],[667,321,27,11],[640,368,36,7],[618,443,31,7],[564,681,23,5],[560,777,27,3],[585,793,26,4]];
const downArrows = [[703,258],[686,288],[658,343],[640,375],[577,663],[596,705]];
const upArrows = [[721,335],[685,363],[667,384],[640,469],[577,760],[595,799]];
const pinkRight = [[638,443],[657,369],[683,326],[701,291],[575,684]];
const blueLeft = [[643,425],[670,351],[688,308],[724,326],[580,720]];

function tri(svg, x, y, dir, color, size) {
    const s = size || 4;
    const d = dir * s;
    add(svg, 'polygon', { points: `${x - d},${y - s} ${x + d},${y} ${x - d},${y + s}`, fill: color });
}

function arrow(svg, x, y, down, color) {
    // 15px tall block arrow, y is the top
    const pts = down
        ? [[x - 2, y], [x + 2, y], [x + 2, y + 8], [x + 5, y + 8], [x, y + 15], [x - 5, y + 8], [x - 2, y + 8]]
        : [[x, y], [x + 5, y + 7], [x + 2, y + 7], [x + 2, y + 15], [x - 2, y + 15], [x - 2, y + 7], [x - 5, y + 7]];
    add(svg, 'polygon', { points: pts.map(p => p.join(',')).join(' '), fill: color });
}

function tag(svg, y, s, bg, fg, right) {
    const r = right || 1018;
    add(svg, 'polygon', { points: `981,${y} 987,${y - 7} ${r},${y - 7} ${r},${y + 7} 987,${y + 7}`, fill: bg, stroke: '#000' });
    label(svg, 989, y + 4, s, fg || '#fff');
}

function drawChart() {
    const svg = document.getElementById('chart');
    const defs = add(svg, 'defs', {});
    const pat = add(defs, 'pattern', { id: 'dots', width: 2, height: 2, patternUnits: 'userSpaceOnUse' });
    add(pat, 'rect', { width: 2, height: 2, fill: '#e7e7e7' });
    add(pat, 'rect', { width: 1, height: 1, fill: '#dcdcdc' });
    add(pat, 'rect', { x: 1, y: 1, width: 1, height: 1, fill: '#dcdcdc' });

    add(svg, 'rect', { x: 7, y: 180, width: 1031, height: 788, fill: '#dedede' });
    add(svg, 'rect', { x: 7, y: 180, width: 974, height: 692, fill: 'url(#dots)' });
    add(svg, 'rect', { x: 7, y: 880, width: 974, height: 62, fill: 'url(#dots)' });

    const times = [[91,'04:00'],[172,'05:00'],[280,'06:00'],[388,'07:00'],[496,'08:00'],[604,'09:00'],[712,'10:00'],[820,'11:00'],[928,'12:00']];
    times.forEach(t => {
        line(svg, t[0] + .5, 180, t[0] + .5, 942, '#e2d8cc');
        line(svg, t[0] + .5, 942, t[0] + .5, 947, '#000');
        add(svg, 'text', { x: t[0], y: 958, 'text-anchor': 'middle', class: 'ax' }, t[1]);
    });
    [829, 826, 823, 820, 817, 814, 811].forEach(p => {
        const y = Math.round(priceY(p)) + .5;
        line(svg, 7, y, 981, y, '#e2d8cc');
    });
    line(svg, 7, 937.5, 981, 937.5, '#e2d8cc');

    // pivot lines
    line(svg, 649, 201.5, 829, 201.5, '#800080');
    line(svg, 649, 287.5, 829, 287.5, '#3aa03a', 2, '2 2');
    line(svg, 654, 400.5, 829, 400.5, '#daa520', 2, '2 2');
    line(svg, 649, 442.5, 829, 442.5, '#8b0000');
    line(svg, 649, 485.5, 829, 485.5, '#000');
    line(svg, 649, 527.5, 829, 527.5, '#000');
    line(svg, 649, 662.5, 829, 662.5, '#008000');
    line(svg, 649, 687.5, 829, 687.5, '#000080');
    line(svg, 650, 772.5, 829, 772.5, '#dc143c', 2, '2 2');
    line(svg, 16, 722, 827, 722, '#ffa500', 2, '14 4 4 4');

    const pivots = [[206,'R1','#a03ca0'],[291,'Y-High','#3a9a3a'],[405,'Y-Close','#c8961e'],[447,'DP','#8b0000'],[490,'PP','#000'],[532,'CP','#000'],[667,'Y-VWAP','#008000'],[692,'S1','#000040'],[777,'Y-Low','#dc143c']];
    pivots.forEach(p => label(svg, 851, p[0], p[1], p[2]));

    path(svg, stepGreen, '#228b22', 2.5, '8 3 3 3');
    path(svg, stepRed, '#ff0000', 2.5, '10 3 3 3');

    cyanMarks.forEach(m => tri(svg, m[0], m[1], 1, '#17b5f5'));
    orangeMarks.forEach(m => tri(svg, m[0], m[1], 1, '#ff6a1e'));

    path(svg, emaGreen, '#2f6b3a');
    path(svg, emaPurple, '#9b30a0');

    // candles
    candles.forEach(c => {
        const x = c[0] + .5;
        line(svg, x, c[3], x, c[4], '#000', 1);
        if (c[5] === 'd') {
            line(svg, x - 3.5, c[1] + .5, x + 3.5, c[1] + .5, '#000');
        } else {
            add(svg, 'rect', { x: x - 3, y: c[1] + .5, width: 6, height: c[2] - c[1], fill: c[5] === 'b' ? '#1e90ff' : '#ff0000', stroke: '#000' });
        }
    });

    ellipses.forEach(e => add(svg, 'ellipse', { cx: e[0], cy: e[1], rx: e[2], ry: e[3], fill: 'rgba(90,90,255,.3)', stroke: '#1a1aff' }));
    downArrows.forEach(a => arrow(svg, a[0], a[1], true, '#ff00ff'));
    upArrows.forEach(a => arrow(svg, a[0], a[1], false, '#0000ff'));
    pinkRight.forEach(m => tri(svg, m[0], m[1], 1, '#ff00ff'));
    tri(svg, 598, 755, -1, '#ff00ff');
    blueLeft.forEach(m => tri(svg, m[0], m[1], -1, '#0000ff'));
    tri(svg, 593, 791, 1, '#0000ff');

    const notes = [[673,257,'+10'],[617,308,'-5'],[626,352,'-5'],[608,422,'-5'],[546,673,'+10'],[555,808,'+10'],[474,787,'Not Filled']];
    notes.forEach(n => label(svg, n[0], n[1], n[2], '#000', 'note'));

    // text over the plot
    label(svg, 318, 197, 'TF 06-12 (5 Min),ETH,Hybrid,2), jtEconNews2b(TF 06-12 (5 Min),15), EMA(TF 06-12 (5 Min),20), EMA(TF 06-12 (5 Min),89), anaPivots', '#000', 'hdr');
    label(svg, 320, 222, 'he day.)', '#c8961e', 'note');
    add(svg, 'polygon', { points: '950,195 965,203 950,211', fill: 'none', stroke: '#000' });
    add(svg, 'rect', { x: 967.5, y: 193.5, width: 3, height: 19, fill: '#fff', stroke: '#000' });
    label(svg, 919, 860, '00:03:37');
    label(svg, 9, 892, 'VolumeGraph(TF 06-12 (5 Min),14,True,7)');

    // volume panel
    volumes.forEach(v => add(svg, 'rect', { x: v[0] - 1, y: v[1], width: 3, height: 937 - v[1], fill: v[2] === 'b' ? '#1e90ff' : '#dc143c' }));
    path(svg, volLine, '#87cefa', 2);

    // the copyright sits on a patch of its own, above the volume line
    add(svg, 'rect', { x: 8, y: 929, width: 125, height: 12, fill: '#e4e4e4' });
    label(svg, 9, 939, '\u00a9 2012 NinjaTrader, LLC');

    // frame and axis
    line(svg, 7, 871.5, 1038, 871.5, '#000');
    line(svg, 7, 941.5, 981, 941.5, '#000');
    line(svg, 980.5, 180, 980.5, 942, '#000');
    [830, 828, 827, 826, 825, 823, 822, 821, 820, 819, 818, 817, 814, 813, 811].forEach(p => {
        const y = Math.round(priceY(p));
        line(svg, 981, y + .5, 986, y + .5, '#000');
        label(svg, 988, y + 4, p.toFixed(1));
    });
    line(svg, 981, 898.5, 986, 898.5, '#000');
    label(svg, 988, 902, '5000');
    label(svg, 988, 944, '0');

    tag(svg, 201, '829.6', '#8b008b');
    tag(svg, 222, '829.0', '#008b00');
    tag(svg, 247, '828.3', '#000');
    tag(svg, 286, '827.2', '#2e8b2e');
    tag(svg, 337, '825.8', '#003300');
    tag(svg, 400, '824.0', '#b8860b', '#000');
    tag(svg, 442, '822.8', '#8b0000');
    tag(svg, 485, '821.6', '#000');
    tag(svg, 519, '820.6', '#00bfff', '#000');
    tag(svg, 527, '820.4', '#000');
    tag(svg, 554, '819.7', '#8b008b');
    tag(svg, 662, '816.6', '#008000');
    tag(svg, 687, '815.9', '#000080');
    tag(svg, 722, '814.9', '#ffa500', '#000');
    tag(svg, 772, '813.5', '#c00000');
    tag(svg, 829, '811.9', '#ff0000');
    tag(svg, 926, '1288.37', '#87cefa', '#000', 1030);
    tag(svg, 932, '526', '#1e90ff', '#fff', 1007);
}

// the axis strips of the two charts behind, given in page coordinates
function drawStrip(id, left, top, width, height, labels, tags, textX) {
    const svg = document.getElementById(id);
    svg.setAttribute('viewBox', `${left} ${top} ${width} ${height}`);
    labels.forEach(l => label(svg, textX, l[0] + 4, l[1]));
    tags.forEach(t => {
        add(svg, 'rect', { x: textX - 1.5, y: t[0] - 6.5, width: 30, height: 13, fill: t[2], stroke: '#000' });
        label(svg, textX, t[0] + 4, t[1], t[3] || '#fff');
    });
}

drawChart();

drawStrip('strip-mid', 244, 131, 991, 804,
    [[163,'820.0'],[304,'810.0'],[374,'805.0'],[515,'795.0'],[585,'790.0'],[656,'785.0'],[726,'780.0'],[796,'775.0'],[867,'770.0']],
    [[186,'818.3','#000'],[237,'814.7','#2e8b2e'],[247,'814.0','#404040'],[333,'807.8','#004000'],[344,'807.1','#8b0000'],[441,'800.1','#000'],[537,'793.4','#008b00'],[646,'785.6','#0000ff'],[842,'771.7','#ff4500']],
    1198);

drawStrip('strip-far', 1104, 263, 170, 677,
    [[271,'830.0'],[304,'829.0'],[336,'828.0'],[368,'827.0'],[401,'826.0'],[433,'825.0'],[498,'823.0'],[530,'822.0'],[563,'821.0'],[595,'820.0'],[628,'819.0'],[660,'818.0'],[693,'817.0'],[757,'815.0'],[790,'814.0'],[822,'813.0'],[855,'812.0'],[887,'811.0']],
    [[284,'829.6','#8b008b'],[325,'828.3','#000'],[361,'827.2','#2e8b2e'],[465,'824.0','#b8860b','#000'],[504,'822.8','#8b0000'],[541,'821.6','#000'],[554,'821.3','#004000'],[581,'820.4','#000'],[705,'816.6','#008000'],[727,'815.9','#000080'],[805,'813.5','#c00000']],
    1236);
```
